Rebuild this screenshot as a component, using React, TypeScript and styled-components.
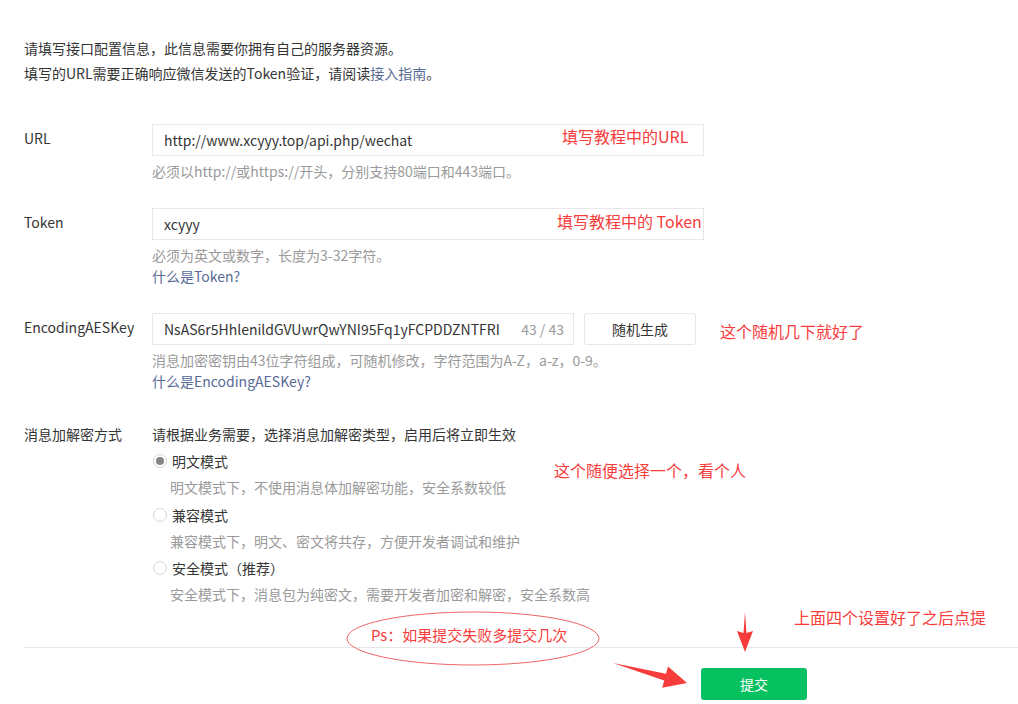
import React from "react";
import styled, { createGlobalStyle } from "styled-components";

const GlobalStyle = createGlobalStyle`
  html, body { margin: 0; padding: 0; background: #ffffff; }
  body {
    font-family: "Noto Sans CJK SC", "Noto Sans", sans-serif;
    font-size: 14px;
    color: #353535;
  }
  * { box-sizing: border-box; }
`;

const Page = styled.div`
  position: relative;
  width: 1018px;
  height: 704px;
  overflow: hidden;
  padding-top: 36px;
`;

const Intro = styled.div`
  padding: 0 24px;
  line-height: 25px;
  margin-bottom: 38px;
`;

const Link = styled.a`
  color: #576b95;
  text-decoration: none;
  cursor: pointer;
`;

const Form = styled.div`
  display: flex;
  flex-direction: column;
`;

const Row = styled.div<{ $space?: number }>`
  display: flex;
  padding-left: 24px;
  margin-bottom: ${(p) => p.$space ?? 26}px;
`;

const Label = styled.div<{ $lh?: number }>`
  width: 128px;
  flex: none;
  line-height: ${(p) => p.$lh ?? 28}px;
`;

const Field = styled.div`
  display: flex;
  flex-direction: column;
`;

const InputLine = styled.div`
  display: flex;
  gap: 10px;
`;

const InputBox = styled.div<{ $w: number }>`
  width: ${(p) => p.$w}px;
  height: 32px;
  border: 1px solid #e7e7eb;
  padding: 0 9px 0 11px;
  display: flex;
  align-items: center;
  background: #fff;
`;

const TextInput = styled.input`
  flex: 1;
  min-width: 0;
  border: 0;
  outline: none;
  padding: 0;
  margin: 0;
  font: inherit;
  color: #353535;
  background: transparent;
  height: 30px;
  line-height: 30px;
`;

const Counter = styled.span`
  color: #9a9a9a;
  margin-left: 4px;
  white-space: nowrap;
`;

const GhostButton = styled.button`
  width: 112px;
  height: 32px;
  border: 1px solid #e7e7eb;
  border-radius: 3px;
  background: #fff;
  font: inherit;
  color: #353535;
  padding: 0;
  cursor: pointer;
`;

const HelpBlock = styled.div`
  margin-top: 5px;
  line-height: 21px;
`;

const Hint = styled.div`
  color: #9a9a9a;
`;

const HelpLink = styled(Link)`
  display: block;
`;

const Header = styled.div`
  line-height: 22px;
`;

const RadioList = styled.div`
  margin-top: 3px;
`;

const RadioItem = styled.div`
  margin-bottom: 1.5px;
`;

const RadioLine = styled.label`
  display: flex;
  align-items: center;
  height: 26px;
  cursor: pointer;
`;

const RadioDot = styled.span<{ $checked?: boolean }>`
  position: relative;
  width: 14px;
  height: 14px;
  flex: none;
  border-radius: 50%;
  border: 1px solid #d4d4d4;
  margin: 0 5px 0 1px;
  background: #fff;
  &::after {
    content: "";
    display: ${(p) => (p.$checked ? "block" : "none")};
    position: absolute;
    left: 2px;
    top: 2px;
    width: 8px;
    height: 8px;
    border-radius: 50%;
    background: #858585;
  }
`;

const RadioDesc = styled.div`
  padding-left: 18px;
  line-height: 26px;
  color: #9a9a9a;
`;

const Divider = styled.div`
  margin: 0 0 0 23px;
  height: 1px;
  background: #e7e7eb;
`;

const Footer = styled.div`
  display: flex;
  padding-left: 701px;
  margin-top: 20px;
`;

const SubmitButton = styled.button`
  width: 106px;
  height: 32px;
  border: 0;
  border-radius: 3px;
  background: #07c160;
  color: #fff;
  font: inherit;
  padding: 0;
  cursor: pointer;
`;

/* ---------- Red annotation overlay ---------- */

const Note = styled.div<{ $x: number; $y: number; $size?: number }>`
  position: absolute;
  left: ${(p) => p.$x}px;
  top: ${(p) => p.$y}px;
  font-size: ${(p) => p.$size ?? 16}px;
  line-height: 20px;
  color: #f73c3c;
  white-space: nowrap;
  pointer-events: none;
`;

const Drawing = styled.svg`
  position: absolute;
  left: 0;
  top: 0;
  pointer-events: none;
`;

const radios = [
  { label: "明文模式", desc: "明文模式下，不使用消息体加解密功能，安全系数较低", checked: true },
  { label: "兼容模式", desc: "兼容模式下，明文、密文将共存，方便开发者调试和维护", checked: false },
  { label: "安全模式（推荐）", desc: "安全模式下，消息包为纯密文，需要开发者加密和解密，安全系数高", checked: false },
];

export default function App() {
  return (
    <>
      <GlobalStyle />
      <Page>
        <Intro>
          <div>请填写接口配置信息，此信息需要你拥有自己的服务器资源。</div>
          <div>
            填写的URL需要正确响应微信发送的Token验证，请阅读<Link>接入指南</Link>。
          </div>
        </Intro>

        <Form>
          <Row>
            <Label>URL</Label>
            <Field>
              <InputBox $w={552}>
                <TextInput readOnly defaultValue="http://www.xcyyy.top/api.php/wechat" />
              </InputBox>
              <HelpBlock>
                <Hint>必须以http://或https://开头，分别支持80端口和443端口。</Hint>
              </HelpBlock>
            </Field>
          </Row>

          <Row>
            <Label>Token</Label>
            <Field>
              <InputBox $w={552}>
                <TextInput readOnly defaultValue="xcyyy" />
              </InputBox>
              <HelpBlock>
                <Hint>必须为英文或数字，长度为3-32字符。</Hint>
                <HelpLink>什么是Token?</HelpLink>
              </HelpBlock>
            </Field>
          </Row>

          <Row $space={31}>
            <Label>EncodingAESKey</Label>
            <Field>
              <InputLine>
                <InputBox $w={422}>
                  <TextInput readOnly defaultValue="NsAS6r5HhlenildGVUwrQwYNI95Fq1yFCPDDZNTFRI" />
                  <Counter>43 / 43</Counter>
                </InputBox>
                <GhostButton>随机生成</GhostButton>
              </InputLine>
              <HelpBlock>
                <Hint>消息加密密钥由43位字符组成，可随机修改，字符范围为A-Z，a-z，0-9。</Hint>
                <HelpLink>什么是EncodingAESKey?</HelpLink>
              </HelpBlock>
            </Field>
          </Row>

          <Row $space={38}>
            <Label $lh={22}>消息加解密方式</Label>
            <Field>
              <Header>请根据业务需要，选择消息加解密类型，启用后将立即生效</Header>
              <RadioList>
                {radios.map((r) => (
                  <RadioItem key={r.label}>
                    <RadioLine>
                      <RadioDot $checked={r.checked} />
                      {r.label}
                    </RadioLine>
                    <RadioDesc>{r.desc}</RadioDesc>
                  </RadioItem>
                ))}
              </RadioList>
            </Field>
          </Row>
        </Form>

        <Divider />
        <Footer>
          <SubmitButton>提交</SubmitButton>
        </Footer>

        <Note $x={562} $y={126}>填写教程中的URL</Note>
        <Note $x={557} $y={211}>填写教程中的 Token</Note>
        <Note $x={720} $y={321}>这个随机几下就好了</Note>
        <Note $x={554} $y={460}>这个随便选择一个，看个人</Note>
        <Note $x={794} $y={607}>上面四个设置好了之后点提</Note>
        <Note $x={371} $y={625} $size={15}>Ps：如果提交失败多提交几次</Note>

        <Drawing width={1018} height={704} viewBox="0 0 1018 704">
          <ellipse cx={473} cy={638.5} rx={126} ry={26.5} fill="none" stroke="#f06565" strokeWidth={1} />
          <polygon
            points="745,612 746.5,633 753,631 745,652 737,631 743.5,633"
            fill="#f73c3c"
          />
          <polygon
            points="613,663 666,673.7 668,666.5 687,683 662.2,687.7 664.2,680.5"
            fill="#f73c3c"
          />
        </Drawing>
      </Page>
    </>
  );
}
